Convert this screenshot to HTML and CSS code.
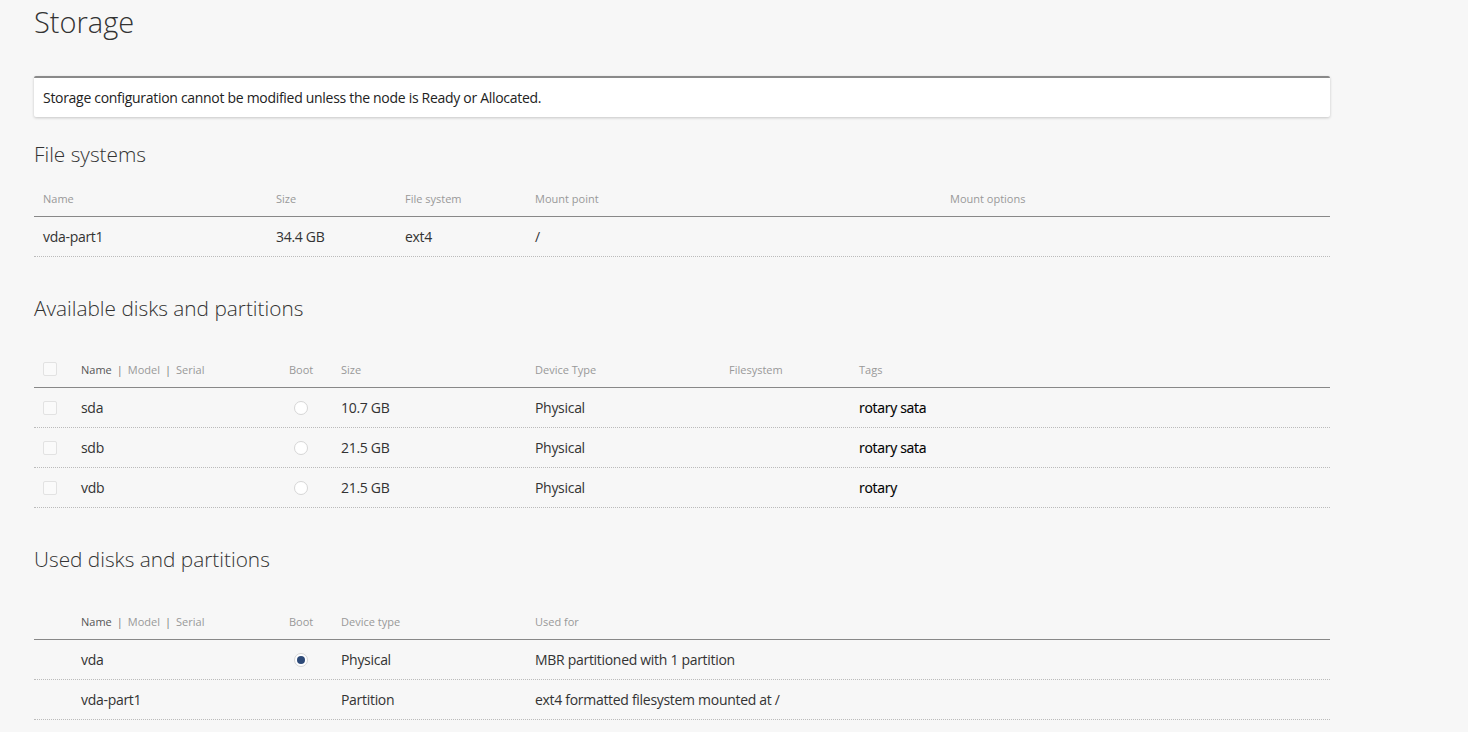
FILE: index.html
```html
<!DOCTYPE html>
<html lang="en">
<head>
<meta charset="utf-8">
<title>Storage</title>
<link rel="stylesheet" href="styles.css">
</head>
<body>
<main class="page">
  <h1 class="page-title">Storage</h1>

  <div class="notice">Storage configuration cannot be modified unless the node is Ready or Allocated.</div>

  <section class="section">
    <h2 class="section-title">File systems</h2>
    <div class="table table-fs" role="table">
      <div class="row head" role="row">
        <div class="cell">Name</div><div class="cell">Size</div><div class="cell">File system</div><div class="cell">Mount point</div><div class="cell">Mount options</div>
      </div>
      <div class="row" role="row">
        <div class="cell">vda-part1</div><div class="cell">34.4 GB</div><div class="cell">ext4</div><div class="cell">/</div><div class="cell"></div>
      </div>
    </div>
  </section>

  <section class="section section-gap">
    <h2 class="section-title">Available disks and partitions</h2>
    <div class="table table-tall table-avail" role="table">
      <div class="row head" role="row">
        <div class="cell"><span class="checkbox"></span></div>
        <div class="cell"><span class="th-main">Name</span><span class="sep">|</span>Model<span class="sep">|</span>Serial</div>
        <div class="cell">Boot</div><div class="cell">Size</div><div class="cell">Device Type</div><div class="cell">Filesystem</div><div class="cell">Tags</div>
      </div>
      <div class="row" role="row">
        <div class="cell"><span class="checkbox"></span></div><div class="cell">sda</div><div class="cell"><span class="radio"></span></div><div class="cell">10.7 GB</div><div class="cell">Physical</div><div class="cell"></div><div class="cell tags">rotary sata</div>
      </div>
      <div class="row" role="row">
        <div class="cell"><span class="checkbox"></span></div><div class="cell">sdb</div><div class="cell"><span class="radio"></span></div><div class="cell">21.5 GB</div><div class="cell">Physical</div><div class="cell"></div><div class="cell tags">rotary sata</div>
      </div>
      <div class="row" role="row">
        <div class="cell"><span class="checkbox"></span></div><div class="cell">vdb</div><div class="cell"><span class="radio"></span></div><div class="cell">21.5 GB</div><div class="cell">Physical</div><div class="cell"></div><div class="cell tags">rotary</div>
      </div>
    </div>
  </section>

  <section class="section section-gap">
    <h2 class="section-title">Used disks and partitions</h2>
    <div class="table table-tall table-used" role="table">
      <div class="row head" role="row">
        <div class="cell"></div>
        <div class="cell"><span class="th-main">Name</span><span class="sep">|</span>Model<span class="sep">|</span>Serial</div>
        <div class="cell">Boot</div><div class="cell">Device type</div><div class="cell">Used for</div>
      </div>
      <div class="row" role="row">
        <div class="cell"></div><div class="cell">vda</div><div class="cell"><span class="radio radio-checked"></span></div><div class="cell">Physical</div><div class="cell">MBR partitioned with 1 partition</div>
      </div>
      <div class="row" role="row">
        <div class="cell"></div><div class="cell">vda-part1</div><div class="cell"></div><div class="cell">Partition</div><div class="cell">ext4 formatted filesystem mounted at /</div>
      </div>
    </div>
  </section>
</main>
</body>
</html>
```

FILE: styles.css
```css
html, body {
  margin: 0;
  padding: 0;
  background: #f7f7f7;
}

body {
  font-family: "Open Sans", "Noto Sans", "Liberation Sans", sans-serif;
  color: #333;
  font-weight: 400;
}

.page {
  width: 1296px;
  padding: 0 0 0 34px;
}

.page-title {
  margin: 0;
  padding-top: 4px;
  font-size: 29px;
  font-weight: 300;
  line-height: 36px;
  color: #333;
}

.notice {
  margin-top: 36px;
  background: #fff;
  border-top: 2px solid #8a8a8a;
  border-radius: 2px;
  box-shadow: 0 1px 3px rgba(0, 0, 0, 0.2);
  padding: 0 9px;
  height: 39px;
  line-height: 39px;
  font-size: 14px;
  letter-spacing: -0.3px;
  color: #222;
}

.section-title {
  margin: 0;
  font-size: 20.8px;
  font-weight: 300;
  line-height: 28px;
  color: #333;
}

.section {
  margin-top: 23px;
}

.section-gap {
  margin-top: 37px;
}

.table {
  width: 1296px;
  margin-top: 12px;
}

.table-tall {
  margin-top: 29px;
}

.table-used {
  margin-top: 30px;
}

.row {
  display: grid;
  align-items: center;
  box-sizing: border-box;
  height: 40px;
  border-bottom: 1px dotted #bbb;
  font-size: 14px;
  letter-spacing: -0.3px;
  color: #333;
  white-space: nowrap;
}

.row.head {
  height: 37px;
  border-bottom: 1px solid #888;
  font-size: 11px;
  letter-spacing: 0;
  color: #999;
}

.table-fs .row {
  grid-template-columns: 233px 129px 130px 415px 1fr;
}

.table-avail .row {
  grid-template-columns: 38px 208px 52px 194px 194px 130px 1fr;
}

.table-used .row {
  grid-template-columns: 38px 208px 52px 194px 1fr;
}

.cell {
  padding-left: 9px;
  display: flex;
  align-items: center;
  min-width: 0;
}

.th-main {
  color: #555;
}

.sep {
  display: inline-block;
  margin: 0 5px;
  color: #777;
}

.tags {
  color: #000;
  -webkit-text-stroke: 0.15px #000;
}

.checkbox {
  display: inline-block;
  width: 12px;
  height: 12px;
  border: 1px solid #e2e2e2;
  border-radius: 2px;
  background: #fafafa;
}

.radio {
  display: inline-block;
  width: 12px;
  height: 12px;
  margin-left: 5px;
  border: 1px solid #d6d6d6;
  border-radius: 50%;
  background: #fff;
  position: relative;
}

.radio-checked::after {
  content: "";
  position: absolute;
  left: 2px;
  top: 2px;
  width: 8px;
  height: 8px;
  border-radius: 50%;
  background: #2d4a78;
}
```
